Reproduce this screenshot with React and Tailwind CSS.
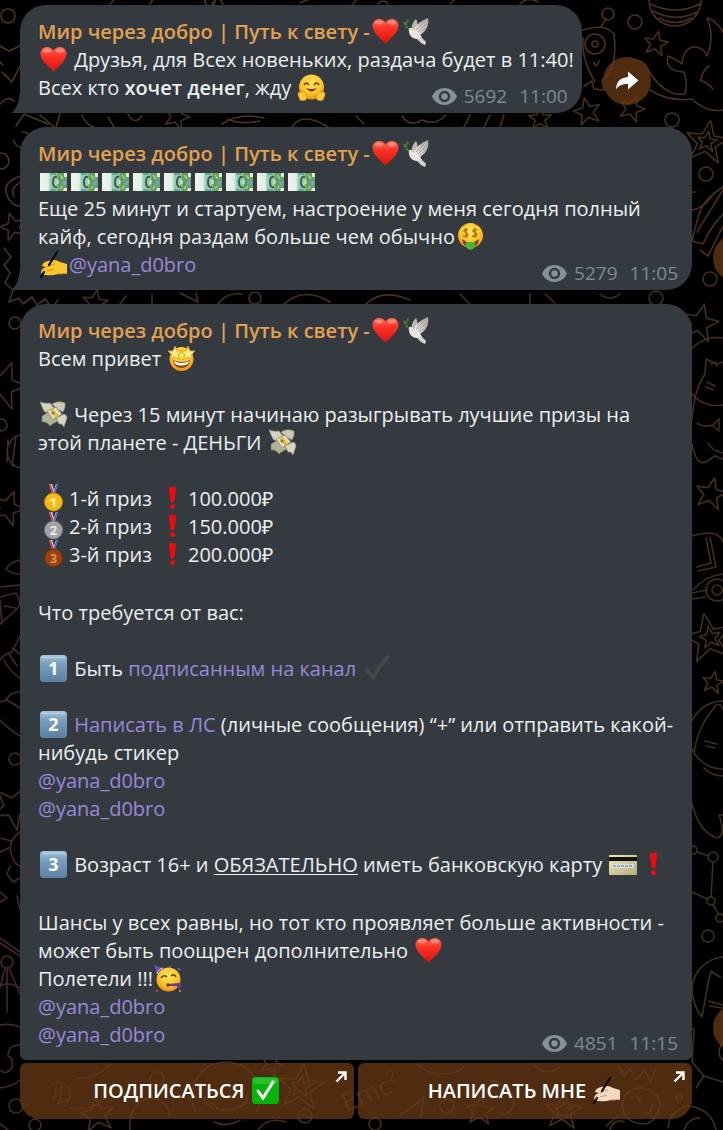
import React from "react";

const STAR = "M0 -14 L4 -4 L14 -4 L6 3 L10 13 L0 7 L-9 13 L-6 3 L-14 -3 L-4 -4 Z";

const stars = [
  { x: 656, y: 43, s: 0.85, r: 12 },
  { x: 587, y: 111, s: 0.95, r: -12 },
  { x: 632, y: 108, s: 0.9, r: 20 },
  { x: 707, y: 141, s: 1.5, r: 10 },
  { x: 707, y: 141, s: 0.7, r: 10 },
  { x: 700, y: 322, s: 1.3, r: 14 },
  { x: 711, y: 493, s: 1.1, r: 14 },
  { x: 708, y: 637, s: 1.7, r: -10 },
  { x: 710, y: 637, s: 0.75, r: -10 },
  { x: 713, y: 682, s: 0.75, r: 12 },
  { x: 13, y: 226, s: 0.95, r: -16 },
  { x: 4, y: 384, s: 1.6, r: 20 },
  { x: 8, y: 507, s: 1.2, r: 22 },
  { x: 14, y: 806, s: 1.5, r: 30 },
  { x: 177, y: 116, s: 0.9, r: 20 },
  { x: 540, y: 118, s: 0.8, r: 0 },
  { x: 95, y: 302, s: 0.9, r: 10 },
  { x: 301, y: 1086, s: 1.6, r: 8 },
  { x: 301, y: 1086, s: 0.75, r: 8 },
  { x: 97, y: 1114, s: 1.2, r: -8 },
  { x: 272, y: 1064, s: 0.8, r: 24 },
  { x: 480, y: 1110, s: 1, r: 6 },
  { x: 563, y: 1110, s: 1.3, r: 6 },
  { x: 563, y: 1110, s: 0.6, r: 6 },
];

const rings = [
  [608, 14, 6], [635, 22, 7], [672, 120, 7], [706, 174, 7], [656, 298, 7], [710, 279, 7], [708, 936, 6],
  [8, 16, 7], [1, 161, 8], [15, 323, 6], [1, 425, 6], [15, 759, 6], [7, 962, 6], [16, 1106, 7],
  [35, 1125, 6], [157, 1079, 7], [305, 1116, 7], [375, 1124, 6], [447, 1106, 7], [679, 1098, 3],
  [713, 857, 5], [711, 901, 4], [693, 850, 4], [720, 918, 4], [210, 1, 5], [255, 298, 6],
];

function Wallpaper() {
  return (
    <svg
      aria-hidden="true"
      className="absolute inset-0 w-full h-full"
      viewBox="0 0 723 1130"
      preserveAspectRatio="xMidYMid slice"
    >
      <defs>
        <linearGradient id="ink" gradientUnits="userSpaceOnUse" x1="0" y1="0" x2="723" y2="1130">
          <stop offset="0" stopColor="#4a3620" />
          <stop offset="0.35" stopColor="#472e22" />
          <stop offset="0.6" stopColor="#3f2c20" />
          <stop offset="1" stopColor="#3a3319" />
        </linearGradient>
        <linearGradient id="inkLeft" gradientUnits="userSpaceOnUse" x1="0" y1="100" x2="0" y2="600">
          <stop offset="0" stopColor="#49352a" />
          <stop offset="1" stopColor="#41272c" />
        </linearGradient>
      </defs>
      <g fill="none" stroke="url(#ink)" strokeWidth="1.6" strokeLinejoin="round" strokeLinecap="round">
        {stars.map((s, i) => (
          <path
            key={i}
            d={STAR}
            transform={`translate(${s.x} ${s.y}) rotate(${s.r}) scale(${s.s})`}
            stroke={s.x < 130 ? "#452c28" : "#42301f"}
            strokeWidth={1.6 / s.s}
          />
        ))}
        {rings.map(([x, y, r], i) => (
          <circle key={i} cx={x} cy={y} r={r} />
        ))}

        {/* striped planet */}
        <path d="M649 0 a26 26 0 0 0 52 0 M650 4 q26 12 50 0 M653 11 q23 12 44 1 M659 18 q17 9 32 0" />
        {/* one-eyed alien */}
        <path d="M583 30 q22 -7 31 4 q4 36 -12 46 l2 10 l-10 -1 l-2 -8 l-8 5 M583 38 q-2 20 12 44 M601 27 l5 -8 M594 62 q2 8 5 -1" />
        <circle cx="595" cy="44" r="10" />
        <circle cx="595" cy="44" r="3" />
        {/* whale */}
        <path d="M632 61 q12 -4 18 12 q16 24 35 21 q3 -12 -1 -22 q-20 -1 -16 -16 q10 4 14 8 q2 -18 14 -17 q8 1 11 9 q8 -20 0 -38 q10 2 17 16 M650 90 q18 12 42 9 q14 14 31 11 M700 80 q8 3 13 9 M709 66 q-8 6 -8 15" />
        {/* rocket by the second message */}
        <path d="M723 187 q-20 12 -25 30 l-6 24 l11 3 q8 -18 20 -30 M697 232 l26 -42 M700 250 l8 6 l15 -30 M692 192 h4 M692 210 q12 -2 20 -14" />

        {/* cats in helmets */}
        <path d="M723 338 a34 34 0 1 0 0 67 M692 420 q2 -30 13 -46 l1 -15 l10 5 l7 -2 M711 365 q4 -6 6 1 M707 382 l8 4 M706 387 l7 3 M697 423 q6 5 16 2 l6 -6 v12 l-7 -6 M692 444 q4 22 14 18 l9 -6 l8 3 M708 443 q4 8 15 10" />
        <path d="M723 701 a34 34 0 1 0 0 68 M694 754 q3 -26 20 -46 q4 -8 9 1 M705 741 l12 3 M706 746 l9 2 M704 768 q8 8 19 8 M692 804 q8 30 26 34 q8 -4 1 -23 h4" />
        <path d="M723 957 a34 34 0 0 0 -31 30 q0 18 10 30 l6 -33 l3 -13 l9 6 M709 1001 l14 4 M710 1006 l12 2" />
        {/* scooter */}
        <path d="M692 536 q26 -8 31 6 M706 538 l5 25 l-14 4 M710 537 l6 30 l-18 4 M693 590 q12 -14 30 -16 M692 593 l15 -3 M693 599 l12 -2" />
        <circle cx="717" cy="590" r="11" />
        <circle cx="717" cy="590" r="5" />
        {/* constellation */}
        <path d="M697 852 l12 4 M713 862 l-2 35 M707 899 l-15 -7 M713 905 l6 9" />

        {/* strips between the messages */}
        <path d="M110 4 l8 -8 M150 4 l4 -6 M212 4 l6 -8 l5 8 M300 3 l12 -5 M352 5 l5 -6 M378 4 q5 -6 10 0 M450 4 l6 -6 M520 4 q8 -8 18 -2" />
        <path d="M40 115 l14 12 M60 114 l-4 13 M82 115 q4 10 12 12 M108 117 l6 10 M128 114 q6 12 14 2 M222 124 q18 -12 42 -6 M228 119 q10 6 32 2 M292 127 q10 -16 36 0 M356 116 l8 8 M402 116 q8 12 20 4 q14 6 24 -5 M464 127 l6 -12 M484 127 l6 -12 M500 127 l4 -12" />
        <path d="M120 304 l6 -8 M152 294 v9 M180 293 l18 9 l-2 -9 M218 304 q8 -12 24 -10 M284 304 q20 -18 46 -2 M366 304 q16 -16 44 -4 M460 294 l10 10 M530 304 v-10 M545 294 l10 9 M600 294 q10 8 20 0" />

        {/* left edge */}
        <g stroke="url(#inkLeft)">
          <path d="M0 46 l9 5 l11 -5 M0 62 l3 3 M2 72 l10 10 l8 -16 M0 104 q8 -9 14 -3 M16 126 l8 -12 l24 10 M14 140 a9 8 0 1 0 8 -8 M20 176 q-16 6 -14 16 q4 14 14 14 M20 183 q-10 4 -6 14" />
          <path d="M4 248 l7 9 l-7 8 l6 8 l-5 10 l8 7 l-4 12 l10 -4 l4 6 l9 -7 l5 8 l8 -6 l7 9 l6 -8" />
          <path d="M20 435 a17 17 0 0 0 0 33 M8 440 l-1 22 M16 436 l-4 30 M20 560 q-10 2 -14 9 q6 5 14 5" />
          <path d="M0 587 l20 -2 M0 597 l16 -4 q6 8 2 15 l-18 16 M0 600 l2 24 M4 606 l12 2 M20 636 l-8 16 q-8 2 -12 8 M12 648 l8 6 M4 660 q6 12 16 18 M9 654 l8 12 M0 702 l7 -2 l13 8 M6 700 q4 -8 14 -8 M0 720 q10 10 20 16" />
          <path d="M20 832 q-14 10 -8 24 q2 8 8 10 M0 838 l11 3 M0 852 l9 -4 M10 866 l-3 8 l6 8 l7 -4 M0 892 l7 6 l-7 4 M17 896 l3 14 M0 938 l20 14 M0 943 l20 13" />
          <path d="M7 968 v44 M5 968 l-5 20 M9 968 l11 26 M0 986 q8 -5 20 2 M0 1025 q12 -2 20 2 M20 1045 q-12 0 -12 11 q6 2 4 12 q-6 8 -12 2" />
          <path d="M0 1088 q14 -2 20 -8 M0 1124 l8 6" />
        </g>

        {/* under the keyboard */}
        <path d="M52 1084 q20 -6 18 16 l-12 3 M56 1088 l-2 12 M62 1086 l-2 14 M76 1078 q20 2 34 -14 M70 1108 q30 4 44 -22" />
        <path d="M130 1130 q-2 -26 18 -32 q20 0 22 20 M196 1112 a34 34 0 1 1 60 0 M204 1098 q4 12 20 12 q20 0 24 -14 M210 1102 l8 6 M238 1108 l10 -5 M214 1122 q12 6 26 -2 M258 1130 q10 -14 28 -8" />
        <path d="M418 1064 q8 10 22 10 q20 0 24 -8 M490 1080 q24 6 24 24 q-4 12 -14 10 M534 1066 q10 10 26 2 M400 1116 l24 -18 l-4 20 M618 1066 l6 10 l6 -8 l6 12 l8 -10 l7 11 l5 -12" />
        <path d="M622 1106 q2 -18 18 -18 q18 2 20 16 q-2 16 -14 20 q-22 0 -24 -18 M630 1098 q8 -6 10 4 M644 1112 q8 4 8 -8 M606 1126 l12 -10 M610 1130 q4 -12 14 -8 M668 1128 q2 -20 22 -22 q22 4 26 24 M684 1130 q4 -12 16 -12" />
        <path d="M690 1026 l4 4 l-2 32 l12 14 l-8 12 M704 1076 l19 6 M723 1060 q-8 -6 0 -18" />
      </g>
      <text x="346" y="1112" transform="rotate(-22 346 1112)" fill="#3d2c20" className="text-[26px]">
        Emc²
      </text>
    </svg>
  );
}

function Emoji({ label, children }) {
  return (
    <svg
      role="img"
      aria-label={label}
      viewBox="0 0 27 27"
      className="inline-block w-[27px] h-[27px] mx-[2px] align-[-6px] overflow-visible shrink-0"
    >
      {children}
    </svg>
  );
}

function EmojiDefs() {
  return (
    <svg aria-hidden="true" className="absolute w-0 h-0">
      <defs>
        <radialGradient id="face" cx="0.5" cy="0.35" r="0.65">
          <stop offset="0" stopColor="#ffe65c" />
          <stop offset="0.6" stopColor="#fdc52d" />
          <stop offset="1" stopColor="#ee8f14" />
        </radialGradient>
        <linearGradient id="heart" x1="0" y1="0" x2="0" y2="1">
          <stop offset="0" stopColor="#ff6a57" />
          <stop offset="0.4" stopColor="#fb2f24" />
          <stop offset="1" stopColor="#d8140e" />
        </linearGradient>
        <linearGradient id="keycap" x1="0" y1="0" x2="0" y2="1">
          <stop offset="0" stopColor="#a9c4de" />
          <stop offset="0.3" stopColor="#7ba0c2" />
          <stop offset="1" stopColor="#5c7f9f" />
        </linearGradient>
        <linearGradient id="wing" x1="1" y1="0" x2="0" y2="1">
          <stop offset="0" stopColor="#a9a59c" />
          <stop offset="0.6" stopColor="#d6d2cb" />
          <stop offset="1" stopColor="#f1efeb" />
        </linearGradient>
        <linearGradient id="note" x1="0" y1="0" x2="1" y2="0">
          <stop offset="0" stopColor="#eef4f0" />
          <stop offset="0.3" stopColor="#e2eee6" />
          <stop offset="0.4" stopColor="#8ccbb2" />
          <stop offset="0.6" stopColor="#9ccfb4" />
          <stop offset="0.7" stopColor="#5f9d55" />
          <stop offset="1" stopColor="#6aa35f" />
        </linearGradient>
        <linearGradient id="card" x1="0" y1="0" x2="1" y2="1">
          <stop offset="0" stopColor="#f0ebb4" />
          <stop offset="1" stopColor="#b5ab84" />
        </linearGradient>
      </defs>
    </svg>
  );
}

const Heart = () => (
  <Emoji label="❤️">
    <path d="M13.5 26 C11 22 0.5 16 0.5 7.6 C0.5 0.6 10 -1.6 13.5 4.6 C17 -1.6 26.5 0.6 26.5 7.6 C26.5 16 16 22 13.5 26 Z" fill="url(#heart)" />
    <ellipse cx="7" cy="4.6" rx="4" ry="2" fill="#ff9c8c" opacity="0.7" />
    <ellipse cx="20" cy="4.6" rx="4" ry="2" fill="#ff9c8c" opacity="0.7" />
  </Emoji>
);

const Dove = () => (
  <Emoji label="🕊">
    <path d="M9 12 C8 8 10 4 13 1 C15 4 15 9 14 13 Z" fill="#bdb9b1" />
    <path d="M10 14 C12 7 18 3 25 0 C26 5 25 12 17 17 Z" fill="url(#wing)" />
    <path d="M13 12 L22 3 M15 14 L24 5 M17 15 L24 9" stroke="#8f8a82" strokeWidth="0.7" />
    <path d="M5 12 C6 9 9 9 10 12 C13 13 17 15 18 18 C19 21 22 22 23 24 L22 27 L18 25 L14 21 C9 21 6 17 6 13 Z" fill="#e9e6e1" />
    <path d="M15 21 L22 27 M17 20 L23 25" stroke="#a7a29a" strokeWidth="0.8" />
    <path d="M6 13 L3 5" stroke="#55743a" strokeWidth="1" />
    <path d="M0 4 L3 4 L4 7 L1 7 Z M4 1 L6 2 L5 5 L3 4 Z M1 9 L4 8 L5 11 Z" fill="#4c7a33" />
  </Emoji>
);

const Hug = () => (
  <Emoji label="🤗">
    <circle cx="13.5" cy="13" r="12.5" fill="url(#face)" />
    <path d="M6 11 Q8.5 7 11 11 M16 11 Q18.5 7 21 11" stroke="#6b3f12" strokeWidth="1.5" fill="none" />
    <path d="M8 14 Q13.5 21 19 14 Q13.5 16 8 14 Z" fill="#7a3b10" />
    <path d="M0 21 Q0 16 3 19 L4 17 Q8 18 9 24 Q7 28 2 26 Z M27 21 Q27 16 24 19 L23 17 Q19 18 18 24 Q20 28 25 26 Z" fill="#ffc93a" stroke="#d98b14" strokeWidth="0.7" />
  </Emoji>
);

const Banknote = () => (
  <Emoji label="💵">
    <rect y="5" width="27" height="18" fill="url(#note)" />
    <path d="M10 6 H16 M10 22 H16" stroke="#5aa387" strokeWidth="1.5" />
    <path d="M17 9 Q13 8 13 14 Q13 20 17 19" fill="none" stroke="#41584b" strokeWidth="2" />
    <path d="M17 12 Q19 14 17 16" fill="none" stroke="#dcebdf" strokeWidth="1.4" />
    <path d="M20 7 L23 11 M20 21 L22 18" stroke="#a7d19c" strokeWidth="1.4" />
    <path d="M22 14 L26 12 V17 L23 18 Z" fill="#6f9fd6" />
    <path d="M24 20 h3 v3 h-4 Z M24 5 h3 v4 h-3 Z" fill="#dfe9d8" />
  </Emoji>
);

const MoneyFace = () => (
  <Emoji label="🤑">
    <circle cx="13.5" cy="12.5" r="12.5" fill="url(#face)" />
    <path d="M5 16 Q13.5 23 22 16 Q21 24 13.5 24 Q6 24 5 16 Z" fill="#7a3b10" />
    <path d="M9 19 H18 V24 Q13.5 30 9 24 Z" fill="#46b635" />
    <g fill="none" stroke="#a86f14" strokeWidth="1.3">
      <path d="M11 7 Q7 5 7 8.5 Q11 10 11 12 Q10 14 6 13 M9 5 V15" />
      <path d="M20 7 Q16 5 16 8.5 Q20 10 20 12 Q19 14 15 13 M18 5 V15" />
    </g>
    <path d="M5 3 L9 1.5 M18 1.5 L22 3" stroke="#a56b12" strokeWidth="1" />
  </Emoji>
);

const WritingHand = ({ fill = "#fcc62f", shade = "#d8910f" }) => (
  <Emoji label="✍️">
    <path d="M2 15 Q3 11 8 10 L14 9 Q17 9 20 11 L27 13 V23 H18 Q12 25 6 24 Q1 24 1 21 Q2 17 6 16 Z" fill={fill} />
    <path d="M7 16 Q12 13 15 13 M7 20 Q11 19 14 18 M18 23 Q22 23 27 22" stroke={shade} strokeWidth="1.2" fill="none" />
    <path d="M17 1 L9 14 M4 21 L1 26" stroke="#0c0c0c" strokeWidth="2.2" strokeLinecap="round" />
  </Emoji>
);

const StarStruck = () => (
  <Emoji label="🤩">
    <circle cx="13.5" cy="14" r="12" fill="url(#face)" />
    <path d="M7 1 L9 6 L14 6 L10 10 L12 15 L7 12 L2 15 L4 10 L0 6 L5 6 Z M20 1 L22 6 L27 6 L23 10 L25 15 L20 12 L15 15 L17 10 L13 6 L18 6 Z" fill="#ffe98a" stroke="#dca01c" strokeWidth="0.9" />
    <path d="M5 15 Q13.5 19 22 15 Q21 23 13.5 23 Q6 23 5 15 Z" fill="#8a4812" />
    <path d="M6 16 Q13.5 20 21 16 L20 19 Q13 22 7 19 Z" fill="#fff" />
  </Emoji>
);

const FlyingMoney = () => (
  <Emoji label="💸">
    <path d="M0 1 Q6 3 10 2 L15 8 L9 12 Q4 12 3 8 Z" fill="#d4d3c2" stroke="#8c8a78" strokeWidth="0.6" />
    <path d="M12 3 Q18 -1 25 2 Q26 6 23 11 L17 8 Z" fill="#c9c9b4" stroke="#88866f" strokeWidth="0.6" />
    <path d="M2 15 L9 11 L18 20 Q12 23 10 25 Q6 20 2 21 Z" fill="#b0b29a" stroke="#77795f" strokeWidth="0.6" />
    <path d="M16 17 L24 13 Q27 14 27 17 L24 26 Q22 22 19 23 Z" fill="#d7d6c6" stroke="#8c8a78" strokeWidth="0.6" />
    <path d="M7 10 L16 6 L22 13 L13 19 Z" fill="#dfdcb6" stroke="#86836a" strokeWidth="0.7" />
    <path d="M10 9 L13 8 L19 15 L16 17 Z" fill="#e4b931" />
    <circle cx="13" cy="12" r="1.5" fill="#7d7b4b" />
  </Emoji>
);

const medals = {
  1: { fill: "#f5bd14", rim: "#c88a08", ink: "#fff3b8" },
  2: { fill: "#a3a3a3", rim: "#7d7d7d", ink: "#e9e9e9" },
  3: { fill: "#9b430f", rim: "#6f2b07", ink: "#e88f45" },
};

const Medal = ({ place }) => {
  const m = medals[place];
  return (
    <Emoji label={`medal ${place}`}>
      <path d="M9 -1 H12 L14 5 L16 -1 H18 L15 8 H12 Z" fill="#dfe3f0" />
      <path d="M9 -1 H10.5 L13.5 6 V8 H12 Z" fill="#d63a3a" />
      <path d="M18 -1 H16.5 L14 6 V8 H15 Z" fill="#4662b8" />
      <circle cx="13.5" cy="17" r="9" fill={m.fill} stroke={m.rim} strokeWidth="1" />
      <text x="13.5" y="22" textAnchor="middle" fill={m.ink} className="text-[13px] font-bold">
        {place}
      </text>
    </Emoji>
  );
};

const Bang = () => (
  <Emoji label="❗">
    <path d="M10 2 H17 L15.5 17 H11.5 Z" fill="#ee0b0b" />
    <circle cx="13.5" cy="21.5" r="2.6" fill="#ee0b0b" />
  </Emoji>
);

const Keycap = ({ n }) => (
  <Emoji label={`keycap ${n}`}>
    <rect width="27" height="27" rx="3.5" fill="url(#keycap)" />
    <path d="M2 2.5 H25" stroke="#c5d8ea" strokeWidth="1.5" opacity="0.7" />
    <text x="13.5" y="20" textAnchor="middle" fill="#fff" className="text-[18px] font-bold">
      {n}
    </text>
  </Emoji>
);

const Tick = () => (
  <Emoji label="✔️">
    <path d="M4 15 L10 23 Q15 12 25 2" fill="none" stroke="#48484a" strokeWidth="4" strokeLinecap="round" strokeLinejoin="round" />
  </Emoji>
);

const CreditCard = () => (
  <Emoji label="💳">
    <rect y="4" width="28" height="20" rx="1" fill="url(#card)" />
    <rect y="6" width="28" height="4" fill="#15130e" />
    <path d="M3 15 H25" stroke="#dcdcdc" strokeWidth="4" />
    <path d="M4 15 H24" stroke="#8e93a8" strokeWidth="1.5" strokeDasharray="3 1" />
  </Emoji>
);

const Party = () => (
  <Emoji label="🥳">
    <circle cx="13.5" cy="14.5" r="12" fill="url(#face)" />
    <path d="M-1 0 L8 3 L2 9 Z" fill="#6b4bb8" />
    <path d="M2 9 Q3 4 8 3" stroke="#c9b7f2" strokeWidth="1.2" fill="none" />
    <path d="M6 13 Q9 9 12 12 M16 11 Q19 8 21 12" stroke="#6b3f12" strokeWidth="1.4" fill="none" />
    <path d="M13 19 L24 18 Q28 20 25 23 Q22 24 22 21 L13 21 Z" fill="#5a3f94" />
    <circle cx="13" cy="20" r="1.8" fill="#7a3b10" />
    <circle cx="15" cy="2" r="1" fill="#e2498c" />
    <circle cx="24" cy="4" r="1.2" fill="#3f7fe0" />
    <circle cx="2" cy="26" r="1.2" fill="#d63a3a" />
    <circle cx="25" cy="26" r="1" fill="#e0a020" />
  </Emoji>
);

const CheckBox = () => (
  <Emoji label="✅">
    <rect width="27" height="27" rx="3.5" fill="#06b30b" />
    <rect x="1" y="1" width="25" height="6" rx="3" fill="#4ccf4d" opacity="0.5" />
    <path d="M6 14 L11 21 L21 5" fill="none" stroke="#fff" strokeWidth="3" strokeLinecap="round" />
  </Emoji>
);

function Eye() {
  return (
    <svg aria-hidden="true" viewBox="0 0 25 17" className="w-[25px] h-[17px]">
      <path fillRule="evenodd" d="M0 8.5 C5 -2.8 20 -2.8 25 8.5 C20 19.8 5 19.8 0 8.5 Z M12.5 2.8 a5.7 5.7 0 1 0 0.01 0 Z" fill="#84929b" />
      <circle cx="12.5" cy="8.5" r="3.2" fill="#84929b" />
    </svg>
  );
}

function ShareButton() {
  return (
    <button
      type="button"
      aria-label="Share"
      className="w-12 h-12 mb-2 shrink-0 rounded-full bg-[#693915]/75 flex items-center justify-center"
    >
      <svg viewBox="0 0 24 20" className="w-6 h-5">
        <path d="M13 0.5 L23.5 9.5 L13 18.5 V13 C7 13 3.5 14.5 1 18.5 C1 11.5 5 6.5 13 6 Z" fill="#fff" />
      </svg>
    </button>
  );
}

function Message({ views, time, className = "", tail = true, children }) {
  return (
    <div className="flex items-end gap-[21px] w-full">
      <article
        className={`relative bg-[#343a40] pl-[18px] pt-[13px] pb-[11px] shrink-0 rounded-t-[26px] ${className} ${
          tail ? "rounded-br-[26px]" : "rounded-b-md"
        }`}
      >
        {tail && (
          <svg aria-hidden="true" viewBox="0 0 10 22" className="absolute -left-[9px] bottom-0 w-[10px] h-[22px]">
            <path d="M9 0 H10 V22 H0 Q8 17 9 0 Z" fill="#343a40" />
          </svg>
        )}
        <h2 className="font-semibold text-[#e3a150]">
          Мир через добро | Путь к свету -<Heart /><Dove />
        </h2>
        {children}
        <div className="absolute right-[14px] bottom-[5px] h-6 flex items-center text-[19px] text-[#7d8a94]">
          <Eye />
          <span className="ml-[7px]">{views}</span>
          <time className="ml-3">{time}</time>
        </div>
      </article>
      <ShareButton />
    </div>
  );
}

function Mention() {
  return <a href="#yana_d0bro" className="text-[#9b87d9]">@yana_d0bro</a>;
}

function KeyboardButton({ className, children }) {
  return (
    <button
      type="button"
      className={`relative flex-1 h-14 bg-[#693915]/75 text-white font-semibold flex items-center justify-center ${className}`}
    >
      {children}
      <svg aria-hidden="true" viewBox="0 0 12 12" className="absolute top-2 right-[7px] w-3 h-3">
        <path d="M1.5 10.5 L10 2 M3 1.5 H10.5 V9" fill="none" stroke="#fff" strokeWidth="2.4" />
      </svg>
    </button>
  );
}

export default function App() {
  return (
    <main className="relative min-h-screen overflow-hidden bg-black font-['Open_Sans','Noto_Sans',sans-serif] text-xl leading-7 text-[#eceef0]">
      <Wallpaper />
      <EmojiDefs />
      <div className="relative flex flex-col gap-[14px] pt-[5px] pl-5 pr-[31px] pb-2">
        <Message views="5692" time="11:00" className="pr-2">
          <p><Heart /> Друзья, для Всех новеньких, раздача будет в 11:40!</p>
          <p>Всех кто <b className="font-semibold">хочет денег</b>, жду <Hug /></p>
        </Message>

        <Message views="5279" time="11:05" className="w-full pr-4">
          <p className="flex">
            {Array.from({ length: 9 }, (_, i) => <Banknote key={i} />)}
          </p>
          <p>
            Еще 25 минут и стартуем, настроение у меня сегодня полный кайф, сегодня раздам больше чем обычно<MoneyFace />
          </p>
          <p><WritingHand /><Mention /></p>
        </Message>

        <div className="flex flex-col gap-[3px]">
          <Message views="4851" time="11:15" className="w-full pr-4" tail={false}>
            <div className="flex flex-col gap-[30px]">
              <div className="flex flex-col gap-7">
                <p>Всем привет <StarStruck /></p>
                <p><FlyingMoney /> Через 15 минут начинаю разыгрывать лучшие призы на этой планете - ДЕНЬГИ <FlyingMoney /></p>
                <div>
                  <p><Medal place={1} />1-й приз <Bang />100.000₽</p>
                  <p><Medal place={2} />2-й приз <Bang />150.000₽</p>
                  <p><Medal place={3} />3-й приз <Bang />200.000₽</p>
                </div>
              </div>

              <div className="flex flex-col gap-7">
                <p>Что требуется от вас:</p>
                <p><Keycap n={1} /> Быть <a href="#channel" className="text-[#9b87d9]">подписанным на канал</a> <Tick /></p>
                <div>
                  <p>
                    <Keycap n={2} /> <a href="#direct" className="text-[#9b87d9]">Написать в ЛС</a> (личные сообщения) “+” или отправить какой-
                    <br />
                    нибудь стикер
                  </p>
                  <p><Mention /></p>
                  <p><Mention /></p>
                </div>
                <p><Keycap n={3} /> Возраст 16+ и <u className="decoration-1 underline-offset-2">ОБЯЗАТЕЛЬНО</u> иметь банковскую карту <CreditCard /><Bang /></p>
              </div>

              <div>
                <p>Шансы у всех равны, но тот кто проявляет больше активности - может быть поощрен дополнительно <Heart /></p>
                <p>Полетели !!!<Party /></p>
                <p><Mention /></p>
                <p><Mention /></p>
              </div>
            </div>
          </Message>

          <div className="flex gap-1">
            <KeyboardButton className="rounded-md rounded-bl-[20px]">
              <span>ПОДПИСАТЬСЯ <CheckBox /></span>
            </KeyboardButton>
            <KeyboardButton className="rounded-md rounded-br-[20px]">
              <span>НАПИСАТЬ МНЕ <WritingHand fill="#f6d9c2" shade="#c79e83" /></span>
            </KeyboardButton>
          </div>
        </div>
      </div>
    </main>
  );
}
